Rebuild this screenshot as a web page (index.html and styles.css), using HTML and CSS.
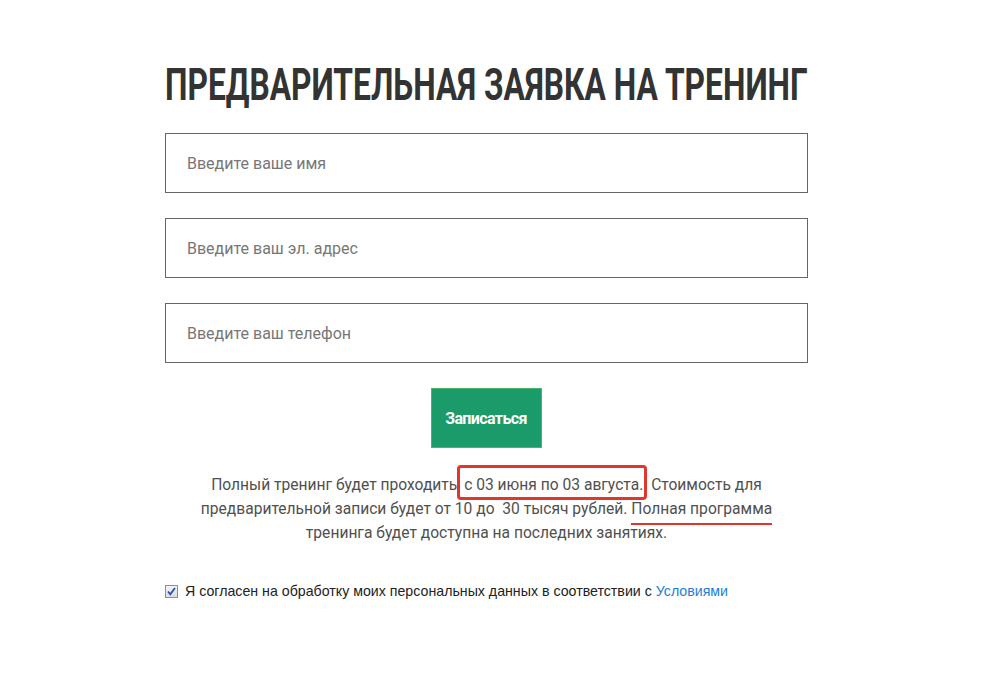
FILE: index.html
```html
<!DOCTYPE html>
<html>
<head>
  <meta charset="UTF-8">
  <title>Предварительная заявка на тренинг</title>
  <link rel="stylesheet" href="styles.css">
</head>
<body>
  <div class="container">
    <h1 class="heading">ПРЕДВАРИТЕЛЬНАЯ ЗАЯВКА НА ТРЕНИНГ</h1>

    <form class="form">
      <input class="field" type="text" placeholder="Введите ваше имя">
      <input class="field" type="text" placeholder="Введите ваш эл. адрес">
      <input class="field" type="text" placeholder="Введите ваш телефон">
      <div class="actions">
        <button class="submit" type="button">Записаться</button>
      </div>
    </form>

    <p class="note">Полный тренинг будет проходить<span class="mark-box"> с 03 июня по 03 августа.</span> Стоимость для предварительной записи будет от 10 до &nbsp;30 тысяч рублей. <span class="mark-line">Полная программа</span> тренинга будет доступна на последних занятиях.</p>

    <label class="agree">
      <span class="check">
        <svg width="11" height="11" viewBox="0 0 11 11"><path d="M2 5.5 L4.3 8.3 L9 2" fill="none" stroke="#2c4fb8" stroke-width="1.8"/></svg>
      </span>
      <span>Я согласен на обработку моих персональных данных в соответствии с <a href="#">Условиями</a></span>
    </label>
  </div>
</body>
</html>
```

FILE: styles.css
```css
body {
  margin: 0;
  background: #fff;
  font-family: Roboto, "Liberation Sans", sans-serif;
}

.container {
  width: 643px;
  margin-left: 165px;
  padding-top: 61px;
}

.heading {
  margin: 0 0 24px;
  font-size: 44px;
  line-height: 48px;
  font-weight: 700;
  color: #333;
  white-space: nowrap;
  transform: scaleX(0.722);
  transform-origin: left center;
}

.form {
  display: flex;
  flex-direction: column;
  gap: 25px;
}

.field {
  box-sizing: border-box;
  width: 100%;
  height: 60px;
  padding: 0 21px;
  border: 1px solid #666;
  font-family: Roboto, "Liberation Sans", sans-serif;
  font-size: 16px;
  color: #333;
  outline: none;
}

.field::placeholder {
  color: #777;
}

.actions {
  display: flex;
  justify-content: center;
  margin-left: -1px;
}

.submit {
  width: 111px;
  height: 60px;
  background: #1a9b69;
  border: 1px solid #4cb46a;
  color: #fff;
  font-family: Roboto, "Liberation Sans", sans-serif;
  font-size: 16px;
  font-weight: 700;
  letter-spacing: -0.6px;
  cursor: pointer;
}

.note {
  width: 600px;
  margin: 25px auto 0;
  text-align: center;
  font-size: 15.6px;
  line-height: 24px;
  color: #505050;
}

.mark-box {
  border: 3px solid #e0362c;
  border-radius: 4px;
  padding: 8px 1px 3px 0;
}

.mark-line {
  border-bottom: 2px solid #e0362c;
  padding-bottom: 5px;
}

.agree {
  display: flex;
  align-items: center;
  gap: 7px;
  margin-top: 38px;
  font-family: "Liberation Sans", Arial, sans-serif;
  font-size: 14.2px;
  color: #222;
}

.check {
  box-sizing: border-box;
  display: flex;
  align-items: center;
  justify-content: center;
  width: 13px;
  height: 13px;
  border: 1px solid #8e8f8f;
  background: linear-gradient(#f4f4f4, #dcdcdc);
}

.agree a {
  color: #1a7fd6;
  text-decoration: none;
}
```
